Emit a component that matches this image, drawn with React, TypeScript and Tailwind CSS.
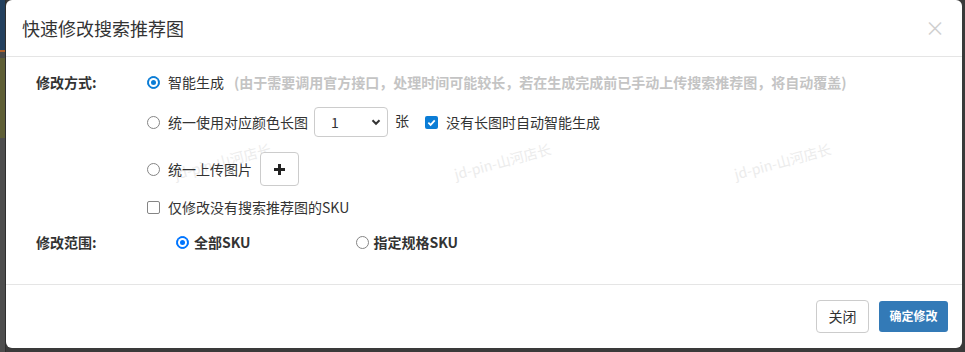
import React from 'react';

const font = { fontFamily: '"Noto Sans CJK SC", "Noto Sans", sans-serif' };

const Radio: React.FC<{ checked?: boolean; tone?: string }> = ({ checked, tone = '#0b7dd6' }) => (
    <span
        className="w-[13px] h-[13px] rounded-full shrink-0 flex items-center justify-center border"
        style={{ borderColor: checked ? tone : '#858585', backgroundColor: checked ? tone : '#fff' }}
    >
        {checked && <span className="w-[9px] h-[9px] rounded-full bg-white flex items-center justify-center">
            <span className="w-[5px] h-[5px] rounded-full" style={{ backgroundColor: tone }} />
        </span>}
    </span>
);

const Checkbox: React.FC<{ checked?: boolean }> = ({ checked }) =>
    checked ? (
        <span className="w-[13px] h-[13px] rounded-[2px] bg-[#0b7dd6] shrink-0 flex items-center justify-center">
            <svg width="9" height="9" viewBox="0 0 10 10">
                <path d="M1.5 5.2 L4 7.6 L8.6 2.6" stroke="#fff" strokeWidth="2" fill="none" />
            </svg>
        </span>
    ) : (
        <span className="w-[13px] h-[13px] rounded-[2px] border border-[#858585] bg-white shrink-0" />
    );

// faint rotated watermark sitting over the form
const Watermark: React.FC<{ left: number }> = ({ left }) => (
    <span
        className="absolute top-[94px] text-[14px] text-[#ececec] whitespace-nowrap pointer-events-none -rotate-[15deg]"
        style={{ left }}
    >
        jd-pin-山河店长
    </span>
);

export default function App() {
    return (
        <div className="w-[965px] h-[352px] bg-[#3a3a3a] flex overflow-hidden" style={font}>
            <div className="w-[6px] h-full flex flex-col shrink-0 border-r border-[#2e2e2e]">
                <div className="h-[50px] bg-[#23405e]" />
                <div className="h-[2px] bg-[#b0602a]" />
                <div className="h-[6px] bg-[#4b4b4b]" />
                <div className="h-[80px] bg-[#5f5f36]" />
                <div className="flex-1 bg-[#4d4d4d]" />
            </div>
            <div className="w-[956px] h-[348px] bg-white rounded-[6px] flex flex-col relative shrink-0">
                <div className="h-[57px] border-b border-[#e5e5e5] flex items-center justify-between pl-[16px] pr-[17px]">
                    <h4 className="text-[18px] text-[#333] leading-none">快速修改搜索推荐图</h4>
                    <span className="text-[20px] leading-none text-[#cfcfcf]">×</span>
                </div>

                <div className="flex-1 pt-[15px] pl-[30px] text-[14px] text-[#333] relative">
                    <Watermark left={167} />
                    <Watermark left={447} />
                    <Watermark left={727} />

                    <div className="flex relative">
                        <div className="w-[111px] h-[20px] flex items-center font-bold">修改方式:</div>
                        <div className="flex flex-col">
                            <div className="h-[20px] flex items-center gap-[8px]">
                                <Radio checked />
                                <span>智能生成</span>
                                <span className="ml-[2px] text-[#c4c4c4] font-bold">
                                    (由于需要调用官方接口，处理时间可能较长，若在生成完成前已手动上传搜索推荐图，将自动覆盖)
                                </span>
                            </div>
                            <div className="mt-[15px] h-[30px] flex items-center">
                                <Radio />
                                <span className="ml-[8px]">统一使用对应颜色长图</span>
                                <div className="ml-[6px] w-[74px] h-[30px] border border-[#cccccc] rounded-[4px] flex items-center justify-between pl-[16px] pr-[6px] bg-white">
                                    <span>1</span>
                                    <svg width="10" height="10" viewBox="0 0 10 10">
                                        <path d="M1.5 3.2 L5 6.8 L8.5 3.2" stroke="#333" strokeWidth="2" fill="none" />
                                    </svg>
                                </div>
                                <span className="ml-[7px] self-start mt-[3px]">张</span>
                                <span className="ml-[16px]"><Checkbox checked /></span>
                                <span className="ml-[8px]">没有长图时自动智能生成</span>
                            </div>
                            <div className="mt-[15px] h-[34px] flex items-center">
                                <Radio />
                                <span className="ml-[8px]">统一上传图片</span>
                                <div className="ml-[8px] w-[39px] h-[34px] border border-[#cccccc] rounded-[4px] flex items-center justify-center bg-white">
                                    <svg width="13" height="13" viewBox="0 0 13 13">
                                        <path d="M6.5 1 V12 M1 6.5 H12" stroke="#222" strokeWidth="3" />
                                    </svg>
                                </div>
                            </div>
                            <div className="mt-[12px] h-[18px] flex items-center gap-[8px]">
                                <Checkbox />
                                <span>仅修改没有搜索推荐图的SKU</span>
                            </div>
                        </div>
                    </div>

                    <div className="mt-[16px] h-[20px] flex items-center relative">
                        <div className="w-[140px] font-bold">修改范围:</div>
                        <Radio checked tone="#0075ff" />
                        <span className="ml-[5px] font-bold">全部SKU</span>
                        <span className="ml-[105px]"><Radio /></span>
                        <span className="ml-[5px] font-bold">指定规格SKU</span>
                    </div>
                </div>

                <div className="h-[64px] border-t border-[#e5e5e5] flex items-center justify-end gap-[10px] pr-[14px] pb-[1px]">
                    <button className="w-[53px] h-[33px] border border-[#cccccc] rounded-[4px] text-[14px] text-[#333] bg-white">关闭</button>
                    <button className="w-[69px] h-[31px] rounded-[3px] text-[12px] font-bold text-white bg-[#337ab7]">确定修改</button>
                </div>
            </div>
        </div>
    );
}
